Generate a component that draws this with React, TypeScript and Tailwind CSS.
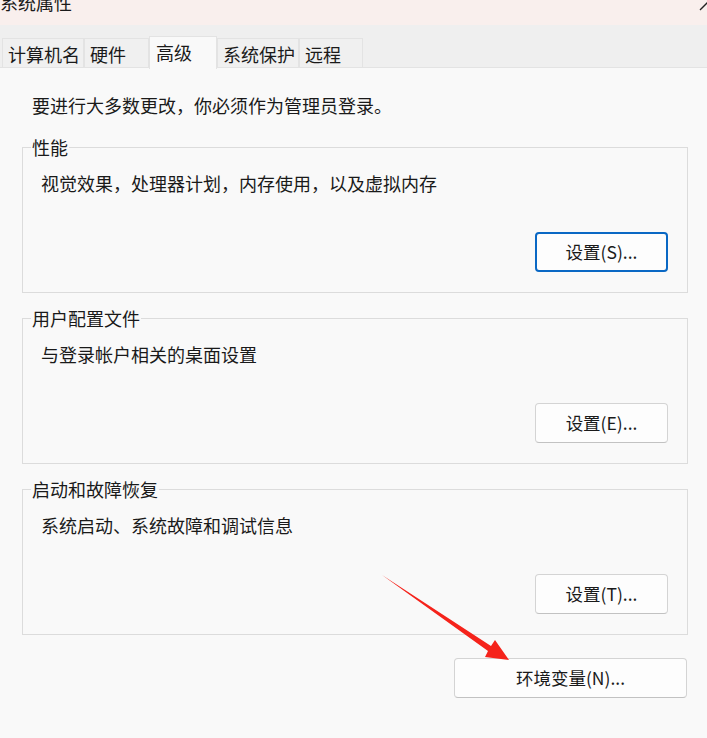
import React from 'react';

const font = { fontFamily: '"Noto Sans CJK SC", "Noto Sans", sans-serif' };

const tabs = [
  { label: '计算机名', w: 'w-[82px]' },
  { label: '硬件', w: 'w-[65px]' },
  { label: '高级', w: 'w-[68px]', active: true },
  { label: '系统保护', w: 'w-[82px]' },
  { label: '远程', w: 'w-[64px]' },
];

function Btn({ label, primary }: { label: string; primary?: boolean }) {
  return (
    <button
      className={`h-[40px] w-[133px] rounded-[4px] bg-[#fdfdfd] text-[17.5px] text-[#1a1a1a] ${
        primary
          ? 'border-2 border-[#0a68c4]'
          : 'border border-[#d4d4d4] border-b-[#c2c2c2]'
      }`}
    >
      {label}
    </button>
  );
}

function Group({ title, desc, btn, primary }: { title: string; desc: string; btn: string; primary?: boolean }) {
  return (
    <fieldset className="mx-[22px] w-[666px] border border-[#dcdcdc] pl-[8px] pr-[19px] pb-[20px]">
      <legend className="px-[1px] text-[18px] leading-[20px] text-[#1a1a1a]">{title}</legend>
      <div className="ml-[10px] mt-[14px] text-[18px] leading-[24px] text-[#1a1a1a]">{desc}</div>
      <div className="mt-[37px] flex justify-end">
        <Btn label={btn} primary={primary} />
      </div>
    </fieldset>
  );
}

export default function App() {
  return (
    <div className="relative h-[738px] w-[707px] overflow-hidden bg-[#f9f9f9]" style={font}>
      {/* title bar */}
      <div className="flex h-[25px] items-start justify-between bg-[#f9efed]">
        <span className="-mt-[7px] text-[18px] leading-[18px] text-[#1a1a1a]">系统属性</span>
        <svg width="8" height="12" viewBox="0 0 8 12">
          <line x1="1" y1="10" x2="11" y2="0" stroke="#222" strokeWidth="1.3" />
        </svg>
      </div>

      {/* tab strip */}
      <div className="flex h-[43px] items-end border-b border-[#e3e3e3] bg-[#efefef] pl-[2px]">
        {tabs.map((t) =>
          t.active ? (
            <div
              key={t.label}
              className={`${t.w} relative -mb-[2px] flex h-[33px] items-start border border-b-0 border-[#e3e3e3] bg-[#f9f9f9] pl-[6px] pt-[3px] text-[18px] leading-[24px] text-[#1a1a1a]`}
            >
              {t.label}
            </div>
          ) : (
            <div
              key={t.label}
              className={`${t.w} flex h-[29px] items-center border border-b-0 border-[#e3e3e3] bg-[#f0f0f0] pl-[5px] pt-[1px] text-[18px] leading-[24px] text-[#1a1a1a]`}
            >
              {t.label}
            </div>
          )
        )}
      </div>

      {/* content */}
      <div className="pt-[25px]">
        <div className="ml-[32px] text-[18px] leading-[24px] text-[#1a1a1a]">
          要进行大多数更改，你必须作为管理员登录。
        </div>
        <div className="mt-[20px] flex flex-col gap-[15px]">
          <Group title="性能" desc="视觉效果，处理器计划，内存使用，以及虚拟内存" btn="设置(S)..." primary />
          <Group title="用户配置文件" desc="与登录帐户相关的桌面设置" btn="设置(E)..." />
          <Group title="启动和故障恢复" desc="系统启动、系统故障和调试信息" btn="设置(T)..." />
        </div>
        <div className="mt-[23px] flex justify-end pr-[20px]">
          <button className="h-[40px] w-[233px] rounded-[4px] border border-[#d4d4d4] border-b-[#c2c2c2] bg-[#fdfdfd] text-[17.5px] text-[#1a1a1a]">
            环境变量(N)...
          </button>
        </div>
      </div>

      {/* red annotation arrow */}
      <svg className="pointer-events-none absolute left-0 top-0" width="707" height="738" viewBox="0 0 707 738">
        <polygon points="382,575 491,646 495,640 509,660 485,657 488,651" fill="#f5231b" />
      </svg>
    </div>
  );
}
